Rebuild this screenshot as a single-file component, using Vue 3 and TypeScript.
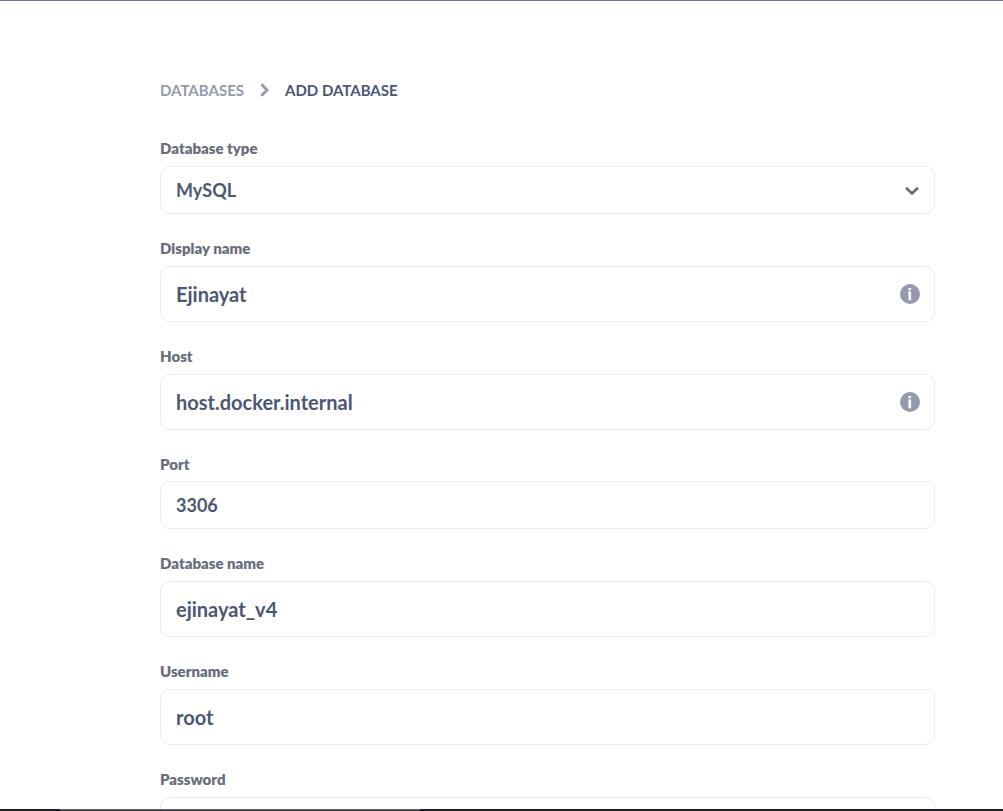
<script setup lang="ts">
import { reactive } from 'vue'

interface Field {
  id: string
  label: string
  kind: 'select' | 'text' | 'number' | 'password'
  info?: boolean
}

const fields: Field[] = [
  { id: 'engine', label: 'Database type', kind: 'select' },
  { id: 'name', label: 'Display name', kind: 'text', info: true },
  { id: 'host', label: 'Host', kind: 'text', info: true },
  { id: 'port', label: 'Port', kind: 'number' },
  { id: 'dbname', label: 'Database name', kind: 'text' },
  { id: 'user', label: 'Username', kind: 'text' },
  { id: 'password', label: 'Password', kind: 'password' },
]

const values = reactive<Record<string, string>>({
  engine: 'MySQL',
  name: 'Ejinayat',
  host: 'host.docker.internal',
  port: '3306',
  dbname: 'ejinayat_v4',
  user: 'root',
  password: '',
})
</script>

<template>
  <div class="page">
    <main class="content">
      <nav class="crumbs" aria-label="Breadcrumb">
        <a href="#databases">Databases</a>
        <svg class="crumb-arrow" viewBox="0 0 9 14" aria-hidden="true">
          <path d="M1.4 1.2 L7.1 7 L1.4 12.8" />
        </svg>
        <span class="current">Add Database</span>
      </nav>
      <form class="form" @submit.prevent>
        <div v-for="f in fields" :key="f.id" class="field" :class="f.kind">
          <label :for="f.id">{{ f.label }}</label>
          <div class="control">
            <select v-if="f.kind === 'select'" :id="f.id" v-model="values[f.id]">
              <option>MySQL</option>
            </select>
            <input
              v-else
              :id="f.id"
              v-model="values[f.id]"
              :type="f.kind === 'password' ? 'password' : 'text'"
              :inputmode="f.kind === 'number' ? 'numeric' : undefined"
              autocomplete="off"
            />
            <svg v-if="f.kind === 'select'" class="chevron" viewBox="0 0 14 10" aria-hidden="true">
              <path d="M1 1.8 L7 7.4 L13 1.8" />
            </svg>
            <button v-if="f.info" class="info" type="button" :aria-label="'About ' + f.label">
              <svg viewBox="0 0 20 20" aria-hidden="true">
                <circle cx="10" cy="10" r="10" />
                <path d="M8.5 4h2.6v2.2H8.5z M8 7.5h3.1v8.7H8.5V8.8H8z" />
              </svg>
            </button>
          </div>
        </div>
      </form>
    </main>
    <footer class="taskbar"><span class="task"></span></footer>
  </div>
</template>

<style>
body {
  margin: 0;
  background: #fff;
}
</style>

<style scoped>
.page {
  box-sizing: border-box;
  height: 100vh;
  display: flex;
  flex-direction: column;
  border-top: 1px solid #7172ad;
  font-family: Lato, "Liberation Sans", sans-serif;
  color: #4c5773;
}
.content {
  flex: 1;
  min-height: 0;
  overflow: hidden;
  padding: 79px 68px 0 160px;
}
.crumbs {
  display: flex;
  align-items: center;
  gap: 16px;
  margin-bottom: 38px;
  font-size: 15px;
  line-height: 20px;
  font-weight: 700;
  text-transform: uppercase;
}
.crumbs a {
  color: #949aab;
  text-decoration: none;
}
.crumb-arrow {
  width: 9px;
  height: 14px;
  fill: none;
  stroke: #949aab;
  stroke-width: 2.8;
}
.form {
  display: flex;
  flex-direction: column;
  gap: 24px;
}
.field {
  display: flex;
  flex-direction: column;
  gap: 8px;
}
.field.number {
  gap: 7px;
}
label {
  font-size: 15px;
  line-height: 20px;
  font-weight: 800;
  color: #696e7b;
}
.control {
  position: relative;
  display: flex;
}
input,
select {
  box-sizing: border-box;
  width: 100%;
  height: 56px;
  margin: 0;
  padding: 0 15px;
  border: 1px solid #eeecec;
  border-radius: 10px;
  background: #fff;
  color: #4c5773;
  font-family: inherit;
  font-size: 20px;
  font-weight: 700;
  outline: none;
  appearance: none;
}
.number input,
select {
  height: 48px;
  font-size: 18px;
}
.chevron {
  position: absolute;
  right: 16px;
  top: 20px;
  width: 14px;
  height: 10px;
  fill: none;
  stroke: #696e7b;
  stroke-width: 2.8;
  pointer-events: none;
}
.info {
  position: absolute;
  right: 15px;
  top: 18px;
  width: 20px;
  height: 20px;
  padding: 0;
  border: 0;
  background: none;
}
.info svg {
  display: block;
  width: 20px;
  height: 20px;
}
.info circle {
  fill: #949aab;
}
.info path {
  fill: #fff;
}
.taskbar {
  height: 2px;
  padding-left: 60px;
  background: #1c1d21;
}
.task {
  display: block;
  box-sizing: border-box;
  width: 360px;
  height: 2px;
  border-top: 1px solid #626365;
  background: #38393c;
}
</style>
